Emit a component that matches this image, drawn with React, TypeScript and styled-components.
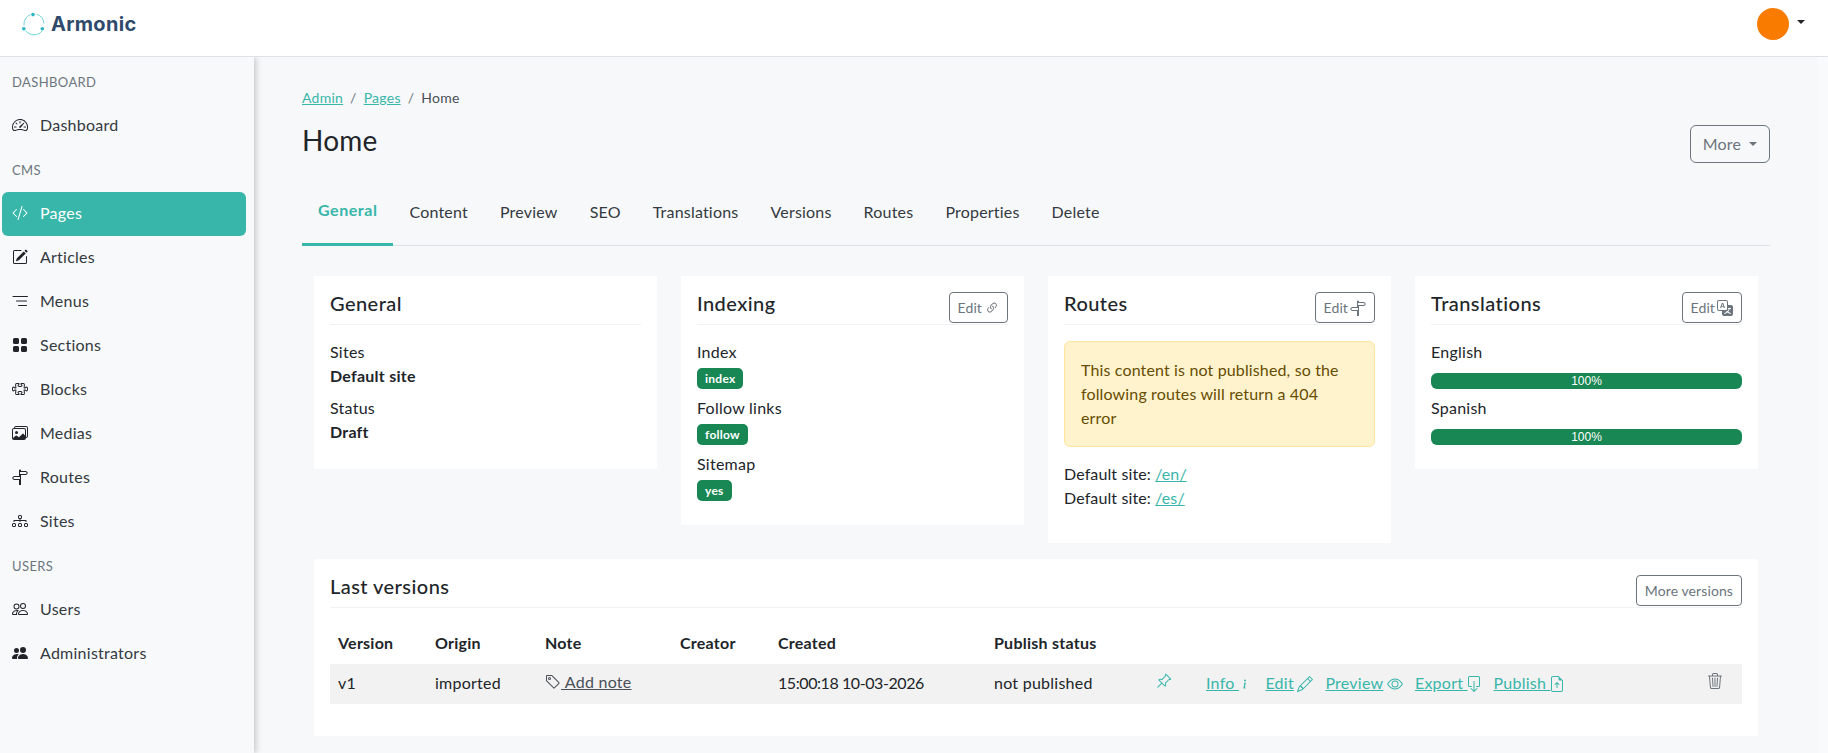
import React from "react";
import styled, { createGlobalStyle } from "styled-components";
import {
  BsSpeedometer2, BsCodeSlash, BsPencilSquare, BsGridFill, BsPuzzle, BsImages,
  BsSignpostSplit, BsDiagram3, BsPeople, BsPeopleFill, BsLink45Deg, BsTranslate, BsPinAngle,
  BsInfo, BsPencil, BsEye, BsBoxArrowDown, BsFileEarmarkArrowUp, BsTrash3, BsTag,
} from "react-icons/bs";

const FONT = `"Lato", "Noto Sans", sans-serif`;

const Global = createGlobalStyle`
  html, body { margin: 0; padding: 0; height: 100%; background: #f9fafb; overflow: hidden; }
  body { font-family: ${FONT}; font-size: 16px; line-height: 24px; color: #212529; letter-spacing: 0.25px; }
  * { box-sizing: border-box; }
`;

const Page = styled.div`
  width: 1828px;
  height: 753px;
  display: flex;
  flex-direction: column;
  overflow: hidden;
`;
const TopBar = styled.header`
  height: 57px;
  flex: none;
  position: relative;
  z-index: 2;
  background: #fff;
  border-bottom: 1px solid #dee2e6;
  display: flex;
  align-items: center;
  justify-content: space-between;
  padding: 0 23px 8px 22px;
`;
const Brand = styled.div`
  display: flex;
  align-items: center;
  gap: 5px;
  font-family: "Inter", sans-serif;
  font-weight: 700;
  font-size: 20px;
  letter-spacing: 0.3px;
  color: #2f4a6b;
`;
const UserMenu = styled.div`
  display: flex;
  align-items: center;
  gap: 8px;
`;
const Avatar = styled.div`
  width: 32px;
  height: 32px;
  border-radius: 50%;
  background: #f97c00;
`;
const Caret = styled.span<{ $c?: string }>`
  display: inline-block;
  width: 0;
  height: 0;
  border-left: 4.8px solid transparent;
  border-right: 4.8px solid transparent;
  border-top: 4.8px solid ${(p) => p.$c ?? "#212529"};
`;
const UserCaret = styled(Caret)`
  margin-bottom: 4px;
`;
const Body = styled.div`
  flex: 1;
  display: flex;
  min-height: 0;
`;
const Sidebar = styled.nav`
  width: 254px;
  flex: none;
  position: relative;
  z-index: 1;
  background: #f8f9fb;
  box-shadow: 2px 0 6px rgba(0, 0, 0, 0.2);
  padding: 3px 8px 0 2px;
`;
const SideLabel = styled.div`
  height: 44px;
  display: flex;
  align-items: center;
  padding-left: 10px;
  font-size: 13px;
  color: #6c757d;
  letter-spacing: 0.4px;
  text-transform: uppercase;
`;
const SideItem = styled.a<{ $active?: boolean }>`
  height: 44px;
  display: flex;
  align-items: center;
  gap: 12px;
  padding: 0 0 2px 10px;
  border-radius: 6px;
  color: ${(p) => (p.$active ? "#fff" : "#343a40")};
  background: ${(p) => (p.$active ? "#38b6aa" : "transparent")};
  svg { width: 16px; height: 16px; flex: none; color: ${(p) => (p.$active ? "#fff" : "#212529")}; }
`;
const Main = styled.main`
  flex: 1;
  background: #f7f8fa;
  margin-right: 10px;
  padding: 30px 48px 0 48px;
  min-width: 0;
`;
const Crumbs = styled.div`
  display: flex;
  align-items: center;
  font-size: 14px;
  line-height: 21px;
  color: #6c757d;
  height: 21px;
`;
const Link = styled.a`
  color: #38b6aa;
  text-decoration: underline;
`;
const Sep = styled.span`
  padding: 0 7px;
`;
const CrumbCurrent = styled.span`
  color: #495057;
`;
const TitleRow = styled.div`
  display: flex;
  justify-content: space-between;
  align-items: flex-start;
  margin-top: 14px;
`;
const H1 = styled.h1`
  margin: 1px 0 0;
  font-size: 28px;
  line-height: 34px;
  font-weight: 400;
  color: #212529;
`;
const MoreButton = styled.button`
  height: 38px;
  width: 80px;
  margin-top: 3px;
  background: transparent;
  border: 1px solid #6c757d;
  border-radius: 6px;
  color: #6c757d;
  font: inherit;
  letter-spacing: inherit;
  display: flex;
  align-items: center;
  justify-content: center;
  gap: 8px;
`;
const Tabs = styled.div`
  display: flex;
  margin-top: 20px;
  border-bottom: 1px solid #dee2e6;
  height: 63px;
`;
const Tab = styled.div<{ $active?: boolean }>`
  padding: 0 16px 6px;
  height: 63px;
  display: flex;
  align-items: center;
  color: ${(p) => (p.$active ? "#38b6aa" : "#343a40")};
  font-weight: ${(p) => (p.$active ? 700 : 400)};
  letter-spacing: ${(p) => (p.$active ? "0.55px" : "0.2px")};
  border-bottom: ${(p) => (p.$active ? "3px solid #38b6aa" : "none")};
`;
const CardGrid = styled.div`
  display: grid;
  grid-template-columns: repeat(4, 343px);
  gap: 16px 24px;
  align-items: start;
  padding: 30px 12px 0;
`;
const Card = styled.section<{ $wide?: boolean }>`
  background: #fff;
  padding: 16px 16px 17px;
  grid-column: ${(p) => (p.$wide ? "1 / -1" : "auto")};
`;
const CardHead = styled.div`
  display: flex;
  justify-content: space-between;
  align-items: flex-start;
  height: 33px;
  border-bottom: 1px solid #f1f2f4;
  margin-bottom: 15px;
`;
const CardTitle = styled.h2`
  margin: -1px 0 0;
  font-size: 20px;
  line-height: 24px;
  font-weight: 500;
  letter-spacing: 0.45px;
  color: #212529;
`;
const SmallBtn = styled.button<{ $gap?: number }>`
  height: 31px;
  padding: 0 8px;
  background: #fff;
  border: 1px solid #6c757d;
  border-radius: 4px;
  color: #6c757d;
  font: inherit;
  font-size: 14px;
  letter-spacing: 0.1px;
  display: flex;
  align-items: center;
  gap: ${(p) => p.$gap ?? 3}px;
  white-space: nowrap;
`;
const Line = styled.div`
  height: 24px;
`;
const Strong = styled.div`
  height: 24px;
  font-weight: 700;
  margin-bottom: 8px;
`;
const BadgeRow = styled.div`
  height: 32px;
  padding-top: 4px;
  display: flex;
  align-items: flex-start;
`;
const Badge = styled.span`
  display: inline-flex;
  align-items: center;
  height: 21px;
  padding: 0 8px;
  border-radius: 5px;
  background: #198754;
  color: #fff;
  font-size: 12px;
  font-weight: 700;
`;
const Alert = styled.div`
  background: #fff3cd;
  border: 1px solid #ffe69c;
  border-radius: 6px;
  padding: 16px 24px 16px 16px;
  color: #664d03;
  letter-spacing: 0.14px;
  margin-bottom: 15px;
  margin-top: 16px;
`;
const RouteList = styled.div`
  margin-bottom: 16px;
  letter-spacing: 0.12px;
`;
const Progress = styled.div`
  height: 16px;
  border-radius: 6px;
  background: #198754;
  color: #fff;
  font-family: "Liberation Sans", sans-serif;
  letter-spacing: 0;
  font-size: 12px;
  line-height: 16px;
  text-align: center;
  margin: 9px 0 7px;
`;
const Table = styled.table`
  width: 1412px;
  table-layout: fixed;
  border-collapse: collapse;
  margin-top: 20px;
`;
const Th = styled.th<{ $w: number }>`
  width: ${(p) => p.$w}px;
  text-align: left;
  padding: 0 8px 6px;
  height: 36px;
  font-weight: 700;
  color: #212529;
  white-space: nowrap;
`;
const Td = styled.td`
  background: #f2f2f2;
  height: 40px;
  padding: 0 8px 2px;
  color: #212529;
  white-space: nowrap;
`;
const DateCell = styled(Td)`
  letter-spacing: -0.42px;
`;
const NoteLink = styled.a`
  color: #495057;
  display: inline-flex;
  align-items: center;
  svg { width: 16px; height: 16px; color: #495057; }
  span { text-decoration: underline; white-space: pre; }
`;
const PinIcon = styled(BsPinAngle)`
  width: 16px;
  height: 16px;
  color: #38b6aa;
`;
const Actions = styled.div`
  display: flex;
  align-items: center;
  gap: 12px;
`;
const Action = styled.div<{ $g: number }>`
  color: #38b6aa;
  white-space: pre;
  span { text-decoration: underline; }
  svg { width: 16px; height: 16px; vertical-align: -3px; margin-left: ${(p) => p.$g}px; }
`;
const TrashIcon = styled(BsTrash3)`
  width: 16px;
  height: 16px;
  color: #6c757d;
`;
const BottomSpace = styled.div`
  height: 15px;
`;

const Logo = () => (
  <svg width="24" height="24" viewBox="0 0 24 24" fill="none">
    <g stroke="#6fd6dc" strokeWidth="1">
      <path d="M14.5 2.3 A10 10 0 0 1 21.9 11.5" />
      <path d="M20.5 18.5 A10.5 10.5 0 0 1 3.5 18.5" />
      <path d="M2 13.5 A10.5 10.5 0 0 1 8.5 2.5" />
    </g>
    <circle cx="11" cy="2.6" r="1.8" fill="#2bb5c5" />
    <circle cx="20.3" cy="16.7" r="1.8" fill="#2bb5c5" />
    <circle cx="1.8" cy="16.7" r="1.8" fill="#2bb5c5" />
  </svg>
);

const MenuLines = () => (
  <svg viewBox="0 0 16 16" fill="none" stroke="currentColor" strokeWidth="1" strokeLinecap="round">
    <path d="M1 3.5H15.5M4.5 8H14.5M6.5 12.5H14.5" />
  </svg>
);

const TABS = ["Content", "Preview", "SEO", "Translations", "Versions", "Routes", "Properties", "Delete"];
const HEADS: [string, number][] = [
  ["Version", 97], ["Origin", 110], ["Note", 135], ["Creator", 98], ["Created", 216],
  ["Publish status", 162], ["", 50], ["", 501], ["", 43],
];

export default function App() {
  return (
    <Page>
      <Global />
      <TopBar>
        <Brand><Logo />Armonic</Brand>
        <UserMenu><Avatar /><UserCaret /></UserMenu>
      </TopBar>
      <Body>
        <Sidebar>
          <SideLabel>Dashboard</SideLabel>
          <SideItem><BsSpeedometer2 />Dashboard</SideItem>
          <SideLabel>CMS</SideLabel>
          <SideItem $active><BsCodeSlash />Pages</SideItem>
          <SideItem><BsPencilSquare />Articles</SideItem>
          <SideItem><MenuLines />Menus</SideItem>
          <SideItem><BsGridFill />Sections</SideItem>
          <SideItem><BsPuzzle />Blocks</SideItem>
          <SideItem><BsImages />Medias</SideItem>
          <SideItem><BsSignpostSplit />Routes</SideItem>
          <SideItem><BsDiagram3 />Sites</SideItem>
          <SideLabel>Users</SideLabel>
          <SideItem><BsPeople />Users</SideItem>
          <SideItem><BsPeopleFill />Administrators</SideItem>
        </Sidebar>
        <Main>
          <Crumbs>
            <Link>Admin</Link><Sep>/</Sep><Link>Pages</Link><Sep>/</Sep><CrumbCurrent>Home</CrumbCurrent>
          </Crumbs>
          <TitleRow>
            <H1>Home</H1>
            <MoreButton>More <Caret $c="#6c757d" /></MoreButton>
          </TitleRow>
          <Tabs>
            <Tab $active>General</Tab>
            {TABS.map((t) => <Tab key={t}>{t}</Tab>)}
          </Tabs>
          <CardGrid>
            <Card>
              <CardHead><CardTitle>General</CardTitle></CardHead>
              <Line>Sites</Line>
              <Strong>Default site</Strong>
              <Line>Status</Line>
              <Strong>Draft</Strong>
            </Card>
            <Card>
              <CardHead>
                <CardTitle>Indexing</CardTitle>
                <SmallBtn>Edit <BsLink45Deg size={14} /></SmallBtn>
              </CardHead>
              <Line>Index</Line>
              <BadgeRow><Badge>index</Badge></BadgeRow>
              <Line>Follow links</Line>
              <BadgeRow><Badge>follow</Badge></BadgeRow>
              <Line>Sitemap</Line>
              <BadgeRow><Badge>yes</Badge></BadgeRow>
            </Card>
            <Card>
              <CardHead>
                <CardTitle>Routes</CardTitle>
                <SmallBtn $gap={2}>Edit <BsSignpostSplit size={16} /></SmallBtn>
              </CardHead>
              <Alert>This content is not published, so the following routes will return a 404 error</Alert>
              <RouteList>
                <Line>Default site: <Link>/en/</Link></Line>
                <Line>Default site: <Link>/es/</Link></Line>
              </RouteList>
            </Card>
            <Card>
              <CardHead>
                <CardTitle>Translations</CardTitle>
                <SmallBtn $gap={2}>Edit <BsTranslate size={16} /></SmallBtn>
              </CardHead>
              <Line>English</Line>
              <Progress>100%</Progress>
              <Line>Spanish</Line>
              <Progress>100%</Progress>
            </Card>
            <Card $wide>
              <CardHead>
                <CardTitle>Last versions</CardTitle>
                <SmallBtn>More versions</SmallBtn>
              </CardHead>
              <Table>
                <thead>
                  <tr>{HEADS.map(([h, w], i) => <Th key={i} $w={w}>{h}</Th>)}</tr>
                </thead>
                <tbody>
                  <tr>
                    <Td>v1</Td>
                    <Td>imported</Td>
                    <Td><NoteLink><BsTag /><span> Add note</span></NoteLink></Td>
                    <Td />
                    <DateCell>15:00:18 10-03-2026</DateCell>
                    <Td>not published</Td>
                    <Td><PinIcon /></Td>
                    <Td>
                      <Actions>
                        <Action $g={-1.5}><span>Info </span><BsInfo /></Action>
                        <Action $g={3.5}><span>Edit</span><BsPencil /></Action>
                        <Action $g={3.5}><span>Preview</span><BsEye /></Action>
                        <Action $g={-2}><span>Export </span><BsBoxArrowDown /></Action>
                        <Action $g={-2}><span>Publish </span><BsFileEarmarkArrowUp /></Action>
                      </Actions>
                    </Td>
                    <Td><TrashIcon /></Td>
                  </tr>
                </tbody>
              </Table>
              <BottomSpace />
            </Card>
          </CardGrid>
        </Main>
      </Body>
    </Page>
  );
}
